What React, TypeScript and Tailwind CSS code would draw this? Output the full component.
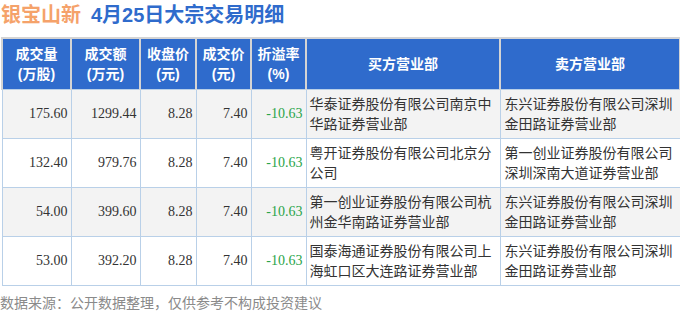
import React from 'react';

type Row = {
  vol: string;
  amount: string;
  close: string;
  price: string;
  rate: string;
  buyer: string;
  seller: string;
};

const rows: Row[] = [
  { vol: '175.60', amount: '1299.44', close: '8.28', price: '7.40', rate: '-10.63', buyer: '华泰证券股份有限公司南京中华路证券营业部', seller: '东兴证券股份有限公司深圳金田路证券营业部' },
  { vol: '132.40', amount: '979.76', close: '8.28', price: '7.40', rate: '-10.63', buyer: '粤开证券股份有限公司北京分公司', seller: '第一创业证券股份有限公司深圳深南大道证券营业部' },
  { vol: '54.00', amount: '399.60', close: '8.28', price: '7.40', rate: '-10.63', buyer: '第一创业证券股份有限公司杭州金华南路证券营业部', seller: '东兴证券股份有限公司深圳金田路证券营业部' },
  { vol: '53.00', amount: '392.20', close: '8.28', price: '7.40', rate: '-10.63', buyer: '国泰海通证券股份有限公司上海虹口区大连路证券营业部', seller: '东兴证券股份有限公司深圳金田路证券营业部' },
];

const headers = [
  ['成交量', '(万股)'],
  ['成交额', '(万元)'],
  ['收盘价', '(元)'],
  ['成交价', '(元)'],
  ['折溢率', '(%)'],
  ['买方营业部'],
  ['卖方营业部'],
];

const cjk = "font-['Liberation_Sans','Noto_Sans_CJK_SC',sans-serif]";

export default function App() {
  return (
    <div className={`w-[680px] h-[316px] overflow-hidden bg-white ${cjk}`}>
      {/* 标题 */}
      <div className="flex items-center gap-[10px] h-[30px] pl-[1px] text-[20px] font-bold leading-none">
        <span className="text-[#f5a26a]">银宝山新</span>
        <span className="text-[#2f6bcc]">4月25日大宗交易明细</span>
      </div>

      {/* 明细表 */}
      <table className="mt-[7px] ml-[1px] w-[678px] table-fixed border-collapse">
        <colgroup>
          <col className="w-[69px]" />
          <col className="w-[69px]" />
          <col className="w-[56px]" />
          <col className="w-[55px]" />
          <col className="w-[55px]" />
          <col className="w-[194px]" />
          <col className="w-[180px]" />
        </colgroup>
        <thead>
          <tr className="h-[51px] bg-[#2f6bcc]">
            {headers.map((h, i) => (
              <th
                key={i}
                className="border-2 border-[#d4d4d4] border-b-[#b9d0e8] border-b text-center text-[14px] font-semibold leading-[20px] text-white"
              >
                {h.map((t) => (
                  <div key={t}>{t}</div>
                ))}
              </th>
            ))}
          </tr>
        </thead>
        <tbody>
          {rows.map((r, i) => (
            <tr key={i} className={`h-[49px] ${i % 2 === 0 ? 'bg-[#f3f3f3]' : 'bg-white'}`}>
              {[r.vol, r.amount, r.close, r.price].map((v, j) => (
                <td key={j} className="border border-[#b9d0e8] pr-[3px] text-right font-['Liberation_Serif',serif] text-[14px] text-[#333]">
                  {v}
                </td>
              ))}
              <td className="border border-[#b9d0e8] pr-[3px] text-right font-['Liberation_Serif',serif] text-[14px] text-[#2aa44a]">
                {r.rate}
              </td>
              <td className="border border-[#b9d0e8] pl-[3px] pr-[2px] text-left text-[14px] leading-[20px] text-[#333]">
                {r.buyer}
              </td>
              <td className="border border-[#b9d0e8] pl-[4px] pr-[2px] text-left text-[14px] leading-[20px] text-[#333]">
                {r.seller}
              </td>
            </tr>
          ))}
        </tbody>
      </table>

      <div className="mt-[7px] text-[14px] leading-[20px] text-[#8a8a8a]">数据来源：公开数据整理，仅供参考不构成投资建议</div>
    </div>
  );
}
